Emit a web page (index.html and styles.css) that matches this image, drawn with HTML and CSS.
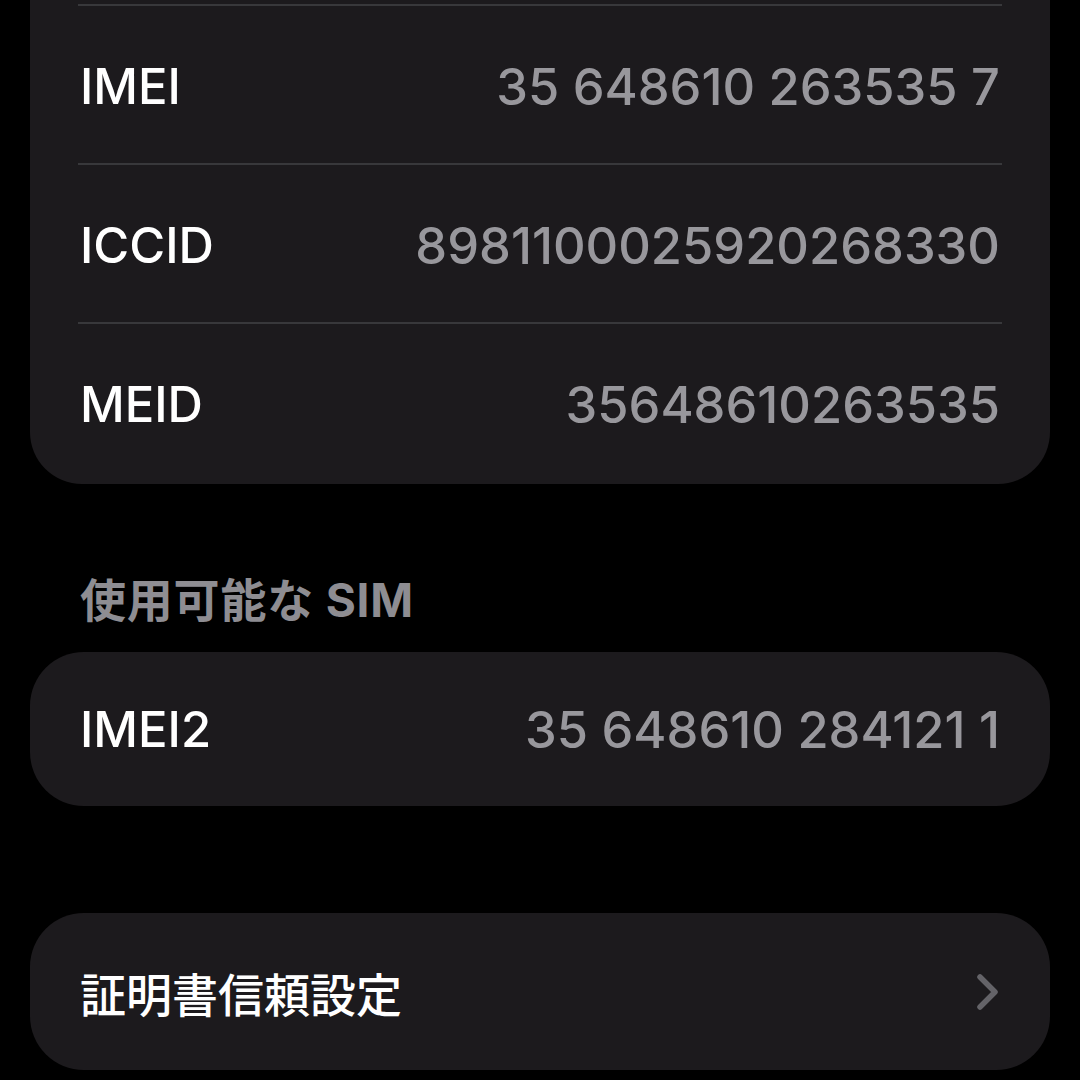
FILE: index.html
```html
<!DOCTYPE html>
<html lang="ja">
<head>
<meta charset="utf-8">
<title>情報</title>
<link rel="stylesheet" href="styles.css">
</head>
<body>
<main class="page">
  <section class="card card-top">
    <div class="divider"></div>
    <div class="row"><span class="label">IMEI</span><span class="value">35 648610 263535 7</span></div>
    <div class="divider"></div>
    <div class="row"><span class="label">ICCID</span><span class="value">8981100025920268330</span></div>
    <div class="divider"></div>
    <div class="row row-last"><span class="label">MEID</span><span class="value">35648610263535</span></div>
  </section>

  <h2 class="section-header">使用可能な SIM</h2>

  <section class="card card-single">
    <div class="row"><span class="label">IMEI2</span><span class="value">35 648610 284121 1</span></div>
  </section>

  <section class="card card-single card-link">
    <div class="row"><span class="label">証明書信頼設定</span>
      <svg class="chevron" width="26" height="40" viewBox="0 0 26 40" aria-hidden="true">
        <path d="M5 5 L20 20 L5 35" fill="none" stroke="currentColor" stroke-width="5.5" stroke-linecap="round" stroke-linejoin="round"/>
      </svg>
    </div>
  </section>
</main>
</body>
</html>
```

FILE: styles.css
```css
html, body {
  margin: 0;
  padding: 0;
  background: #000;
}
body {
  width: 1080px;
  height: 1080px;
  overflow: hidden;
  font-family: Inter, "Noto Sans CJK JP", sans-serif;
}
.page {
  display: flex;
  flex-direction: column;
  padding: 0 30px;
}
.card {
  background: #1c1a1d;
  border-radius: 54px;
  padding: 0 50px;
}
.card-top {
  border-top-left-radius: 0;
  border-top-right-radius: 0;
  padding-top: 4px;
  border-bottom-left-radius: 52px;
  border-bottom-right-radius: 52px;
}
.divider {
  height: 2px;
  background: #38383b;
  margin: 0 -2px;
}
.row {
  display: flex;
  align-items: center;
  justify-content: space-between;
  height: 157px;
}
.card-top .row {
  padding-top: 3px;
  height: 154px;
}
.card-top .row-last {
  padding-top: 0;
  height: 160px;
}
.label {
  color: #ffffff;
  font-size: 49px;
  font-weight: 500;
  font-family: Inter, "Noto Sans CJK JP", sans-serif;
}
.value {
  color: #98979c;
  font-size: 50.6px;
  font-weight: 500;
}
.section-header {
  margin: 91px 0 27px 50px;
  font-size: 46px;
  line-height: 50px;
  letter-spacing: 0.8px;
  font-weight: 700;
  color: #8e8d92;
  font-family: Inter, "Noto Sans CJK JP", sans-serif;
}
.card-single .row {
  height: 154px;
}
.card-link {
  margin-top: 107px;
}
.card-link .row {
  height: 157px;
}
.card-link .label {
  font-family: "Noto Sans CJK JP", sans-serif;
  font-size: 46px;
}
.chevron {
  color: #646368;
  margin-right: -1px;
}
```
